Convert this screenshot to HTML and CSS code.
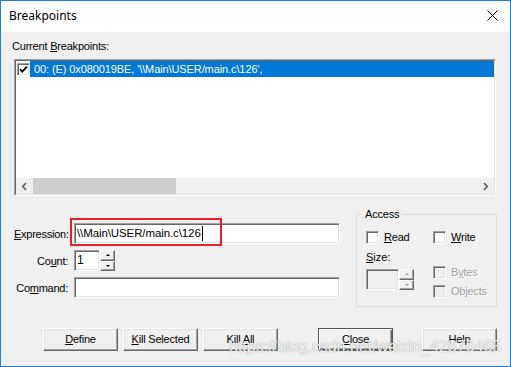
FILE: index.html
```html
<!DOCTYPE html>
<html>
<head>
<meta charset="utf-8">
<link rel="stylesheet" href="styles.css">
</head>
<body>
<div class="window">
  <div class="titlebar">
    <span class="title">Breakpoints</span>
    <svg class="close-x" width="11" height="11" viewBox="0 0 11 11"><path d="M0.5 0.5 L10.5 10.5 M10.5 0.5 L0.5 10.5" stroke="#000" stroke-width="1" fill="none"/></svg>
  </div>
  <div class="body">
    <div class="lbl-current">Current <u>B</u>reakpoints:</div>
    <div class="listbox">
      <div class="listbox-in">
        <div class="list-items">
          <div class="item">
            <span class="chk"><svg width="9" height="9" viewBox="0 0 9 9"><polyline points="1,4.2 3.3,6.6 8,1.6" stroke="#000" stroke-width="1.9" fill="none"/></svg></span>
            <span class="sel">00: (E) 0x080019BE, '\\Main\USER/main.c\126', </span>
          </div>
        </div>
        <div class="hscroll">
          <div class="sarrow"><svg width="7" height="9" viewBox="0 0 7 9"><polyline points="5,1 1.8,4.5 5,8" stroke="#606060" stroke-width="1.7" fill="none"/></svg></div>
          <div class="track"><div class="thumb"></div></div>
          <div class="sarrow"><svg width="7" height="9" viewBox="0 0 7 9"><polyline points="2,1 5.2,4.5 2,8" stroke="#606060" stroke-width="1.7" fill="none"/></svg></div>
        </div>
      </div>
    </div>
    <div class="lower">
      <div class="form">
        <div class="row">
          <label class="flabel"><u>E</u>xpression:</label>
          <div class="edit wide">\\Main\USER/main.c\126<span class="caret"></span></div>
        </div>
        <div class="row">
          <label class="flabel">Co<u>u</u>nt:</label>
          <div class="edit count">1</div>
          <div class="spin">
            <div class="spinbtn"><span class="up"></span></div>
            <div class="spinbtn"><span class="down"></span></div>
          </div>
        </div>
        <div class="row">
          <label class="flabel">Co<u>m</u>mand:</label>
          <div class="edit wide"></div>
        </div>
      </div>
      <fieldset class="access">
        <legend>Access</legend>
        <div class="access-in">
          <div class="col1">
            <div class="cbrow"><span class="chk"></span><span><u>R</u>ead</span></div>
            <div class="size-lbl"><u>S</u>ize:</div>
            <div class="sizebox">
              <div class="edit size disabled"></div>
              <div class="spin disabled">
                <div class="spinbtn"><span class="up"></span></div>
                <div class="spinbtn"><span class="down"></span></div>
              </div>
            </div>
          </div>
          <div class="col2">
            <div class="cbrow"><span class="chk"></span><span><u>W</u>rite</span></div>
            <div class="cbrow bytes dis"><span class="chk off"></span><span>B<u>y</u>tes</span></div>
            <div class="cbrow objects dis"><span class="chk off"></span><span>Objects</span></div>
          </div>
        </div>
      </fieldset>
    </div>
    <div class="buttons">
      <div class="btn"><u>D</u>efine</div>
      <div class="btn"><u>K</u>ill Selected</div>
      <div class="btn">Kill <u>A</u>ll</div>
      <div class="btn default close-btn"><u>C</u>lose</div>
      <div class="btn help-btn">Help</div>
    </div>
  </div>
  <div class="annot"></div>
  <div class="watermark">https://blog.csdn.net/weixin_42876465</div>
</div>
</body>
</html>
```
FILE: styles.css
```css
html, body {
  margin: 0;
  padding: 0;
  background: #fff;
}
.window {
  width: 511px;
  height: 367px;
  box-sizing: border-box;
  border: 1px solid #1c80d8;
  display: flex;
  flex-direction: column;
  position: relative;
  overflow: hidden;
  font-family: "Liberation Sans", Arial, sans-serif;
  font-size: 11px;
  color: #000;
}
.titlebar {
  height: 31px;
  flex: none;
  background: #fff;
  display: flex;
  align-items: center;
  justify-content: space-between;
  padding: 0 12px 0 8px;
}
.title {
  font-family: "Noto Sans", "Liberation Sans", sans-serif;
  font-size: 12px;
  margin-top: -2px;
}
.close-x {
  margin-top: -2px;
}
.body {
  flex: 1;
  background: #f0f0f0;
  padding: 8px 13px 0 13px;
}
u {
  text-decoration: underline;
  text-underline-offset: 1px;
}
.lbl-current {
  line-height: 13px;
  margin-left: -2px;
  letter-spacing: -0.2px;
}
.listbox {
  margin-top: 6px;
  width: 482px;
  height: 137px;
  box-sizing: border-box;
  border: 1px solid;
  border-color: #a0a0a0 #fff #fff #a0a0a0;
}
.listbox-in {
  height: 100%;
  box-sizing: border-box;
  border: 1px solid;
  border-color: #696969 #e3e3e3 #e3e3e3 #696969;
  background: #fff;
  display: flex;
  flex-direction: column;
}
.list-items {
  flex: 1;
}
.item {
  display: flex;
  align-items: center;
  height: 16px;
}
.item .chk {
  margin-left: 1px;
}
.sel {
  flex: 1;
  height: 16px;
  line-height: 16px;
  background: #0078d7;
  color: #fff;
  padding-left: 4px;
  white-space: pre;
  letter-spacing: -0.1px;
}
.chk {
  width: 13px;
  height: 13px;
  flex: none;
  box-sizing: border-box;
  background: #fff;
  border: 1px solid;
  border-color: #a0a0a0 #fff #fff #a0a0a0;
  box-shadow: inset 1px 1px #696969, inset -1px -1px #e3e3e3;
  display: flex;
  align-items: center;
  justify-content: center;
}
.chk.off {
  background: #f0f0f0;
}
.hscroll {
  height: 16px;
  display: flex;
  background: #f0f0f0;
}
.sarrow {
  width: 17px;
  display: flex;
  align-items: center;
  justify-content: center;
}
.track {
  flex: 1;
}
.thumb {
  width: 143px;
  height: 100%;
  background: #cdcdcd;
}
.lower {
  display: flex;
  margin-top: 12px;
}
.form {
  margin-top: 15px;
  display: flex;
  flex-direction: column;
  gap: 6px;
}
.row {
  display: flex;
  align-items: center;
  height: 21px;
}
.flabel {
  width: 54px;
  margin-right: 6px;
  text-align: right;
  white-space: nowrap;
  letter-spacing: -0.25px;
}
.edit {
  height: 21px;
  box-sizing: border-box;
  background: #fff;
  border: 1px solid;
  border-color: #a0a0a0 #fff #fff #a0a0a0;
  box-shadow: inset 1px 1px #696969, inset -1px -1px #e3e3e3;
  padding: 0 2px;
  line-height: 19px;
  white-space: pre;
  display: flex;
  align-items: center;
}
.edit.wide {
  width: 266px;
  font-size: 11.5px;
  letter-spacing: -0.1px;
}
.edit.count {
  width: 26px;
  font-size: 12px;
}
.edit.size {
  width: 33px;
}
.edit.disabled {
  background: #f0f0f0;
}
.caret {
  display: inline-block;
  width: 1px;
  height: 15px;
  background: #000;
  margin-left: 1px;
}
.spin {
  width: 15px;
  height: 21px;
  display: flex;
  flex-direction: column;
}
.spinbtn {
  flex: 1;
  box-sizing: border-box;
  background: #f0f0f0;
  border: 1px solid;
  border-color: #fff #696969 #696969 #fff;
  box-shadow: inset -1px -1px #a0a0a0;
  display: flex;
  align-items: center;
  justify-content: center;
}
.up {
  width: 0;
  height: 0;
  border-left: 2px solid transparent;
  border-right: 2px solid transparent;
  border-bottom: 2px solid #000;
}
.down {
  width: 0;
  height: 0;
  border-left: 2px solid transparent;
  border-right: 2px solid transparent;
  border-top: 2px solid #000;
}
.spin.disabled .up {
  border-bottom-color: #a0a0a0;
}
.spin.disabled .down {
  border-top-color: #a0a0a0;
}
.access {
  margin: 0 0 0 auto;
  width: 141px;
  height: 99px;
  box-sizing: border-box;
  border: 1px solid #dcdcdc;
  padding: 0;
  min-width: 0;
}
.access legend {
  margin-left: 5px;
  padding: 0 3px;
  line-height: 13px;
  letter-spacing: -0.2px;
}
.access-in {
  display: flex;
  padding: 10px 0 0 9px;
}
.col1 {
  width: 67px;
  display: flex;
  flex-direction: column;
}
.col2 {
  display: flex;
  flex-direction: column;
}
.cbrow {
  display: flex;
  align-items: center;
  gap: 5px;
  height: 13px;
  line-height: 13px;
  letter-spacing: -0.2px;
}
.cbrow.bytes {
  margin-top: 22px;
}
.cbrow.objects {
  margin-top: 6px;
}
.cbrow.dis {
  color: #a0a0a0;
  text-shadow: 1px 1px #fff;
}
.size-lbl {
  margin-top: 7px;
  line-height: 13px;
}
.sizebox {
  margin-top: 5px;
  display: flex;
}
.buttons {
  display: flex;
  margin-top: 21px;
  padding-left: 29px;
  gap: 5px;
}
.btn {
  width: 75px;
  height: 23px;
  box-sizing: border-box;
  background: #f0f0f0;
  border: 1px solid;
  border-color: #fff #696969 #696969 #fff;
  box-shadow: inset -1px -1px #a0a0a0, inset 1px 1px #e3e3e3;
  text-align: center;
  line-height: 21px;
  letter-spacing: -0.2px;
}
.btn.default {
  border-color: #555;
  box-shadow: inset 1px 1px #fff, inset -1px -1px #696969, inset -2px -2px #a0a0a0;
}
.close-btn {
  margin-left: 35px;
}
.help-btn {
  margin-left: 24px;
}
.annot {
  position: absolute;
  left: 69px;
  top: 217px;
  width: 152px;
  height: 28px;
  box-sizing: border-box;
  border: 2px solid #e5202a;
}
.watermark {
  position: absolute;
  left: 228px;
  top: 337px;
  font-size: 16px;
  font-family: "Liberation Sans", Arial, sans-serif;
  color: rgba(255, 255, 255, 0.9);
  text-shadow: 0 0 1px rgba(110, 110, 110, 0.55), 0 0 1px rgba(110, 110, 110, 0.4);
  white-space: nowrap;
}
```
